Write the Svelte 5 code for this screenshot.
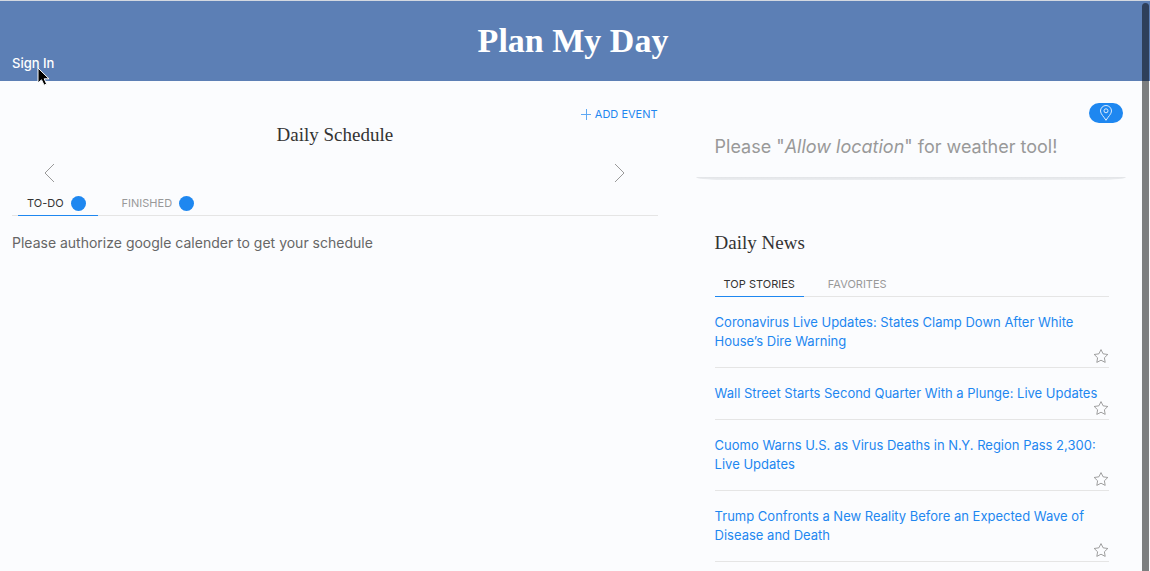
<script>
  const stories = [
    'Coronavirus Live Updates: States Clamp Down After White House’s Dire Warning',
    'Wall Street Starts Second Quarter With a Plunge: Live Updates',
    'Cuomo Warns U.S. as Virus Deaths in N.Y. Region Pass 2,300: Live Updates',
    'Trump Confronts a New Reality Before an Expected Wave of Disease and Death'
  ];
  let scheduleTab = $state('todo');
  let newsTab = $state('top');
</script>

<div class="page">
  <header>
    <h1>Plan My Day</h1>
    <button class="sign-in">Sign In</button>
  </header>

  <main>
    <section class="schedule">
      <button class="add">
        <svg width="10" height="11" viewBox="0 0 10 11" aria-hidden="true"><path d="M5.500 0v11M0 5.500h10" /></svg>
        Add event
      </button>
      <h2>Daily Schedule</h2>
      <div class="days">
        <button aria-label="Previous day">
          <svg width="12" height="20" viewBox="0 0 12 20"><path d="M10 1 1 10l9 9" /></svg>
        </button>
        <button aria-label="Next day">
          <svg width="12" height="20" viewBox="0 0 12 20"><path d="M1 1l9 9-9 9" /></svg>
        </button>
      </div>
      <div class="tabs schedule-tabs">
        <button class:active={scheduleTab === 'todo'} onclick={() => (scheduleTab = 'todo')}>To-Do <span class="badge"></span></button>
        <button class:active={scheduleTab === 'done'} onclick={() => (scheduleTab = 'done')}>Finished <span class="badge"></span></button>
      </div>
      <p>Please authorize google calender to get your schedule</p>
    </section>

    <aside>
      <section class="weather">
        <button class="locate" aria-label="Use my location">
          <svg width="14" height="16" viewBox="0 0 14 16"><path d="M7 15.300C5 11.800 1.500 9 1.500 6a5.500 5.500 0 0 1 11 0C12.500 9 9 11.800 7 15.300Z" /><circle cx="7" cy="5.800" r="2" /></svg>
        </button>
        <p>Please "<em>Allow location</em>" for weather tool!</p>
      </section>

      <section class="news">
        <h2>Daily News</h2>
        <div class="tabs">
          <button class:active={newsTab === 'top'} onclick={() => (newsTab = 'top')}>Top stories</button>
          <button class:active={newsTab === 'fav'} onclick={() => (newsTab = 'fav')}>Favorites</button>
        </div>
        <ul>
          {#each stories as story}
            <li>
              <a href="#story">{story}</a>
              <button class="star" aria-label="Add to favorites">
                <svg width="16" height="16" viewBox="0 0 20 20"><polygon points="10 2 12.630 7.270 18.500 8.120 14.250 12.220 15.250 18 10 15.270 4.750 18 5.750 12.220 1.500 8.120 7.370 7.270" /></svg>
              </button>
            </li>
          {/each}
        </ul>
      </section>
    </aside>
  </main>

  <div class="scrollbar"></div>
  <svg class="pointer" width="14" height="20" viewBox="0 0 14 20" aria-hidden="true"><path d="M1 1v15l3.500-3.200 2.600 5.400 2.500-1.200-2.400-5.200H12Z" /></svg>
</div>

<style>
  :global(body) {
    margin: 0;
    background: #fbfcfe;
  }
  .page {
    position: relative;
    height: 100vh;
    overflow: hidden;
    box-sizing: border-box;
    border-top: 1px solid #d3d8e0;
    font: 14px/20px Inter, sans-serif;
    color: #666;
  }
  button {
    margin: 0;
    padding: 0;
    border: 0;
    background: none;
    color: inherit;
    font: inherit;
    cursor: pointer;
  }
  svg {
    display: block;
    fill: none;
    stroke: currentColor;
  }
  h1, h2, p, ul {
    margin: 0;
    padding: 0;
  }
  header {
    display: grid;
    height: 80px;
    background: #5c7fb5;
    color: #fff;
  }
  h1, .sign-in {
    grid-area: 1 / 1;
  }
  h1 {
    align-self: center;
    padding-right: 4px;
    font: bold 34px/40px "Liberation Serif", serif;
    text-align: center;
  }
  .sign-in {
    place-self: end start;
    padding: 0 12px 10px;
    font-size: 13px;
    line-height: 16px;
    font-weight: 500;
  }
  main {
    display: grid;
    grid-template-columns: 3fr 2fr;
    gap: 38px;
    padding: 0 24px 0 12px;
  }
  h2 {
    color: #333;
    font: 19px/28px "Liberation Serif", serif;
  }
  .schedule {
    display: flex;
    flex-direction: column;
    padding-top: 23px;
  }
  .add {
    display: flex;
    align-items: center;
    gap: 4px;
    align-self: flex-end;
    color: #1e87f0;
    font-size: 11px;
    line-height: 20px;
    text-transform: uppercase;
  }
  .add svg {
    opacity: 0.7;
  }
  .schedule h2 {
    margin-top: -3px;
    text-align: center;
  }
  .days {
    display: flex;
    justify-content: space-between;
    padding: 14px 32px 8px;
    color: #999;
  }
  .tabs {
    display: flex;
    gap: 15px;
    border-bottom: 1px solid #e5e5e5;
    color: #999;
    font-size: 11px;
    line-height: 16px;
  }
  .tabs button {
    display: flex;
    align-items: center;
    gap: 7px;
    margin-bottom: -1px;
    padding: 4px 9px;
    border-bottom: 1px solid transparent;
    text-transform: uppercase;
  }
  .tabs .active {
    border-color: #1e87f0;
    color: #333;
  }
  .schedule-tabs {
    padding-left: 6px;
  }
  .schedule-tabs button {
    padding-right: 12px;
  }
  .badge {
    width: 15px;
    height: 15px;
    border-radius: 50%;
    background: #1e87f0;
  }
  .schedule p {
    margin-top: 17px;
  }
  .weather {
    display: flex;
    flex-direction: column;
    height: 99px;
  }
  .weather::after {
    content: "";
    height: 3px;
    margin-top: auto;
    border-radius: 0 0 26px 26px / 0 0 3px 3px;
    background: linear-gradient(#e2e4e7, #eceef1);
  }
  .locate {
    display: grid;
    place-items: center;
    align-self: flex-end;
    width: 34px;
    height: 20px;
    margin: 22px 3px 0 0;
    border-radius: 10px;
    background: #1e87f0;
    color: #fff;
  }
  .locate svg {
    opacity: 0.85;
  }
  .weather p {
    margin-top: 10px;
    padding-left: 19px;
    color: #999;
    font-size: 18px;
    line-height: 28px;
  }
  .news {
    padding: 49px 17px 0 19px;
  }
  .news .tabs {
    margin-top: 15px;
  }
  li {
    position: relative;
    padding: 16px 0;
    border-bottom: 1px solid #e5e5e5;
    list-style: none;
    font-size: 13px;
    line-height: 19px;
  }
  a {
    color: #1e87f0;
    text-decoration: none;
  }
  .star {
    position: absolute;
    right: 0;
    bottom: 3px;
    color: #888;
  }
  .scrollbar {
    position: absolute;
    top: 2px;
    right: 1px;
    bottom: 0;
    width: 7px;
    border-radius: 4px 4px 0 0;
    background: rgba(0, 0, 0, 0.5);
  }
  .pointer {
    position: absolute;
    top: 66px;
    left: 37px;
    fill: #000;
    stroke: #fff;
  }
</style>
